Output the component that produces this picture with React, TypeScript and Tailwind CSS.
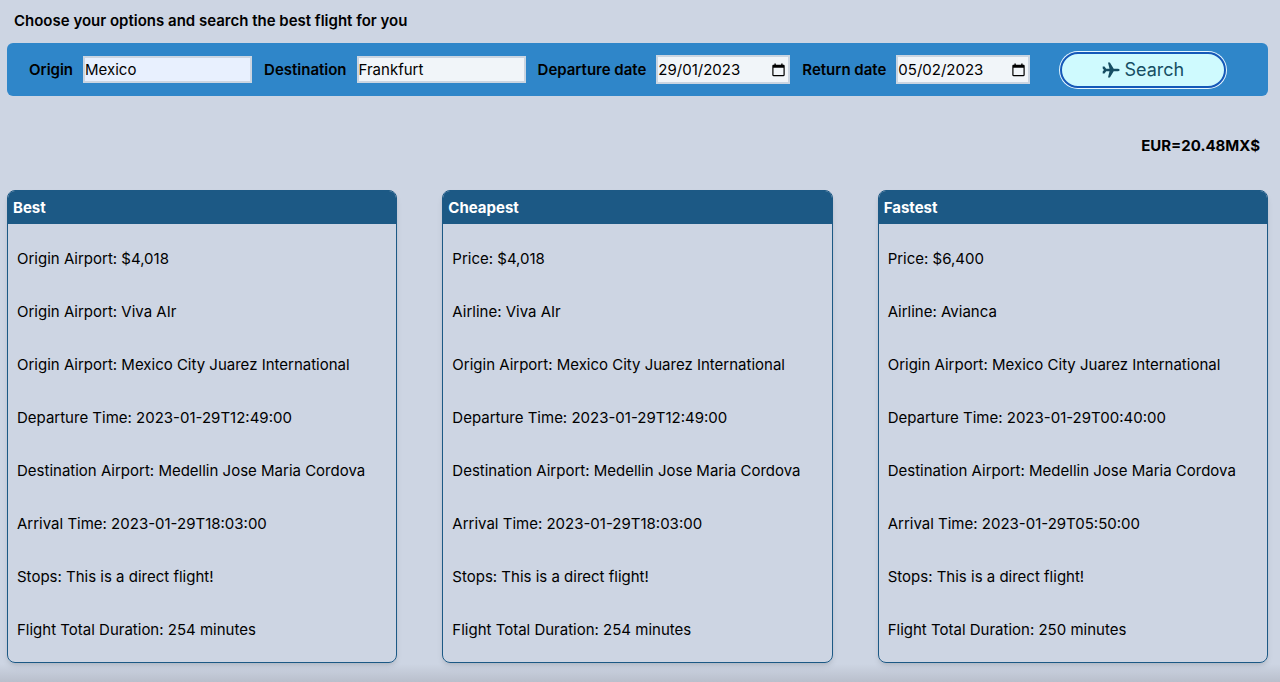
import { useState } from "react";

type Flight = { title: string; rows: string[] };

const flights: Flight[] = [
  {
    title: "Best",
    rows: [
      "Origin Airport: $4,018",
      "Origin Airport: Viva AIr",
      "Origin Airport: Mexico City Juarez International",
      "Departure Time: 2023-01-29T12:49:00",
      "Destination Airport: Medellin Jose Maria Cordova",
      "Arrival Time: 2023-01-29T18:03:00",
      "Stops: This is a direct flight!",
      "Flight Total Duration: 254 minutes",
    ],
  },
  {
    title: "Cheapest",
    rows: [
      "Price: $4,018",
      "Airline: Viva AIr",
      "Origin Airport: Mexico City Juarez International",
      "Departure Time: 2023-01-29T12:49:00",
      "Destination Airport: Medellin Jose Maria Cordova",
      "Arrival Time: 2023-01-29T18:03:00",
      "Stops: This is a direct flight!",
      "Flight Total Duration: 254 minutes",
    ],
  },
  {
    title: "Fastest",
    rows: [
      "Price: $6,400",
      "Airline: Avianca",
      "Origin Airport: Mexico City Juarez International",
      "Departure Time: 2023-01-29T00:40:00",
      "Destination Airport: Medellin Jose Maria Cordova",
      "Arrival Time: 2023-01-29T05:50:00",
      "Stops: This is a direct flight!",
      "Flight Total Duration: 250 minutes",
    ],
  },
];

function CalendarIcon() {
  return (
    <svg viewBox="0 0 13 14" className="h-[14px] w-[13px]" aria-hidden="true">
      <path
        fillRule="evenodd"
        fill="#000"
        d="M2.4 0.5h1.400v1.300h5.400V0.500h1.400v1.300h.9c.7 0 1.200.5 1.200 1.200v9.100c0 .7-.5 1.200-1.200 1.200h-10C.8 13.300.3 12.800.3 12.100V3c0-.7.5-1.200 1.200-1.200h.9zM1.500 4.800v6.900c0 .2.200.4.4.4h9.200c.2 0 .4-.2.4-.4V4.800z"
      />
    </svg>
  );
}

function PlaneIcon() {
  return (
    <svg viewBox="0 0 18 16" className="h-4 w-[18px]" aria-hidden="true">
      <path
        fill="currentColor"
        d="M17.700 8c0 .8-1.300 1.300-2.700 1.300h-3.300L7.900 15.500H6l1.500-6.200H4.200L2.500 11.500H.7V9.400L2 8 .7 6.600V4.500h1.800l1.700 2.200h3.300L6 .5h1.900l3.800 6.200H15c1.400 0 2.700.5 2.700 1.300z"
      />
    </svg>
  );
}

function TextField({ id, label, initial, tone }: { id: string; label: string; initial: string; tone: string }) {
  const [value, setValue] = useState(initial);
  return (
    <div className="flex items-center gap-[10px]">
      <label htmlFor={id} className="font-semibold">{label}</label>
      <input
        id={id}
        value={value}
        onChange={(e) => setValue(e.target.value)}
        className={`h-[27px] w-[169px] border-2 border-[#cbd5e1] outline-none ${tone}`}
      />
    </div>
  );
}

function DateField({ id, label, initial }: { id: string; label: string; initial: string }) {
  const [value, setValue] = useState(initial);
  return (
    <div className="flex items-center gap-[10px]">
      <label htmlFor={id} className="font-semibold">{label}</label>
      <div className="flex h-[29px] w-[134px] items-center border-2 border-[#cbd5e1] bg-[#f1f5f9] pr-[3px]">
        <input
          id={id}
          value={value}
          onChange={(e) => setValue(e.target.value)}
          className="min-w-0 flex-1 bg-transparent outline-none"
        />
        <button type="button" aria-label={`Pick ${label.toLowerCase()}`}>
          <CalendarIcon />
        </button>
      </div>
    </div>
  );
}

function FlightCard({ title, rows }: Flight) {
  return (
    <section className="rounded-lg border border-[#1c5985] shadow-md">
      <h2 className="rounded-t-[7px] bg-[#1c5985] px-[5px] py-1 font-bold leading-[25px] text-white">{title}</h2>
      <ul className="px-[9px] pt-2 pb-[6px]">
        {rows.map((row, i) => (
          <li key={i} className="leading-[53px]">{row}</li>
        ))}
      </ul>
    </section>
  );
}

export default function App() {
  return (
    <div className="flex min-h-screen flex-col bg-[#cdd5e3] font-['Inter',sans-serif] text-[15px] leading-6 text-black">
      <main className="flex-1 pr-3 pl-[7px]">
        <h1 className="px-[7px] pt-[9px] pb-[10px] font-semibold">
          Choose your options and search the best flight for you
        </h1>
        <form
          onSubmit={(e) => e.preventDefault()}
          className="flex min-h-[53px] items-center gap-3 rounded-md bg-[#2f86c9] pl-[22px]"
        >
          <TextField id="origin" label="Origin" initial="Mexico" tone="bg-[#e8f0fe]" />
          <TextField id="destination" label="Destination" initial="Frankfurt" tone="bg-[#f1f5f9]" />
          <DateField id="departure" label="Departure date" initial="29/01/2023" />
          <DateField id="return" label="Return date" initial="05/02/2023" />
          <button
            type="submit"
            className="ml-[18px] flex h-9 w-[166px] items-center justify-center gap-1 rounded-full border-2 border-[#1558b8] bg-[#cffafe] text-lg text-[#164e63] ring-1 ring-[#e6f6ff]"
          >
            <PlaneIcon />
            Search
          </button>
        </form>
        <p className="pt-[37px] pr-2 pb-8 text-right font-bold leading-[25px]">EUR=20.48MX$</p>
        <div className="grid grid-cols-3 gap-[45px]">
          {flights.map((f) => (
            <FlightCard key={f.title} {...f} />
          ))}
        </div>
      </main>
      <div className="h-[18px] bg-gradient-to-b from-transparent to-[#b9bfcc]" />
    </div>
  );
}
